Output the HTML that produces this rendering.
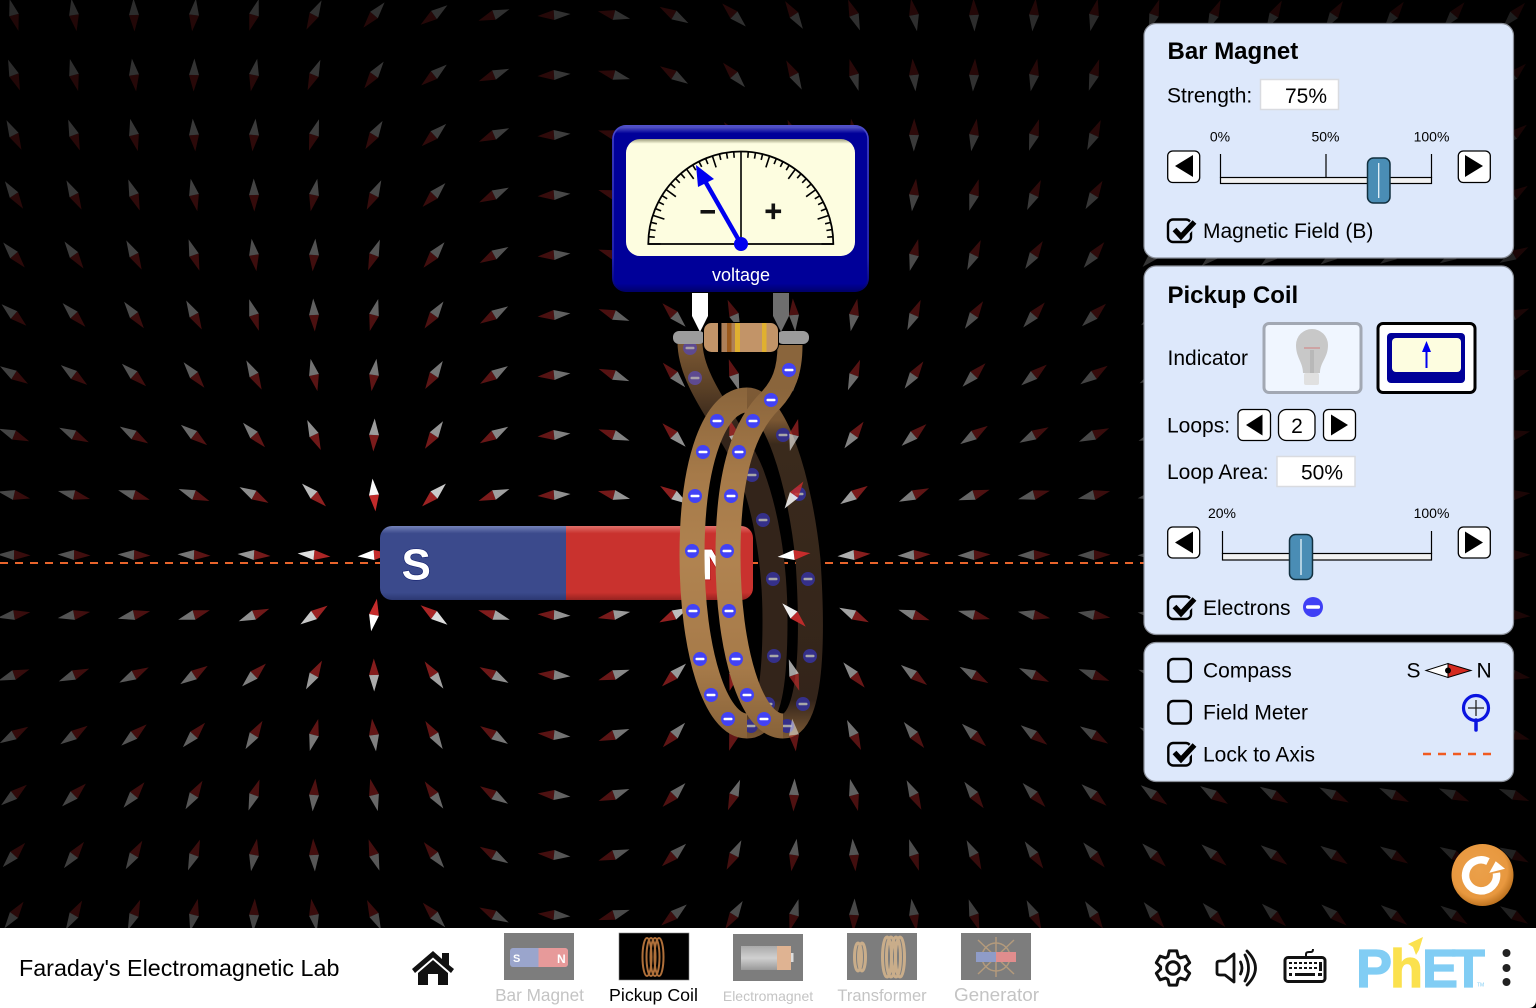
<!DOCTYPE html>
<html><head><meta charset="utf-8"><title>Faraday's Electromagnetic Lab</title>
<style>
html,body{margin:0;padding:0;background:#000;width:1536px;height:1008px;overflow:hidden}
svg{display:block;position:absolute;left:0;top:0}
text{font-family:"Liberation Sans",sans-serif;fill:#000}
.t{font-size:21px}.h{font-size:24px;font-weight:bold}.s{font-size:14px;text-anchor:middle}
.panel{fill:#dde8fb;stroke:#8a8f99;stroke-width:1.2}
.box{fill:#fff;stroke:#d9dbe0;stroke-width:1.5}
.btn{fill:#fff;stroke:#000;stroke-width:1.3}
.cb{fill:none;stroke:#000;stroke-width:2.4}
.halo{fill:none;stroke:#dde8fb;stroke-width:8}
.ck{fill:none;stroke:#000;stroke-width:5.2}
.thumb{fill:#4a8db5;stroke:#12303f;stroke-width:1.5}
.track{fill:#f2f2f2;stroke:#000;stroke-width:1.2}
.tk{stroke:#000;stroke-width:1.2}
.logoB{fill:#81cdf4;stroke:#81cdf4;stroke-width:1.2;font-size:54px;font-weight:bold}
.logoY{fill:#fbe14e;stroke:#fbe14e;stroke-width:1.2;font-size:54px;font-weight:bold}
</style></head>
<body>
<svg width="1536" height="1008" viewBox="0 0 1536 1008" xmlns="http://www.w3.org/2000/svg">
<defs>
<linearGradient id="backG" gradientUnits="userSpaceOnUse" x1="0" y1="340" x2="0" y2="740">
<stop offset="0" stop-color="#7e5a34"/><stop offset=".12" stop-color="#5a4026"/><stop offset=".22" stop-color="#33241a"/><stop offset=".9" stop-color="#33241a"/><stop offset=".97" stop-color="#6a4c2e"/><stop offset="1" stop-color="#7e5a34"/>
</linearGradient>
<linearGradient id="backR" gradientUnits="userSpaceOnUse" x1="0" y1="340" x2="0" y2="740">
<stop offset="0" stop-color="#83603a"/><stop offset=".2" stop-color="#7a5733"/><stop offset=".26" stop-color="#3a2a1c"/><stop offset=".9" stop-color="#33241a"/><stop offset=".97" stop-color="#6a4c2e"/><stop offset="1" stop-color="#7e5a34"/>
</linearGradient>
<linearGradient id="frontG" gradientUnits="userSpaceOnUse" x1="0" y1="388" x2="0" y2="738">
<stop offset="0" stop-color="#8a653c"/><stop offset=".25" stop-color="#a67a49"/><stop offset=".5" stop-color="#b08350"/><stop offset=".8" stop-color="#a67a49"/><stop offset="1" stop-color="#876239"/>
</linearGradient>
<linearGradient id="magS" x1="0" y1="0" x2="0" y2="1"><stop offset="0" stop-color="#7482b8"/><stop offset=".1" stop-color="#3b4a8c"/><stop offset=".9" stop-color="#3b4a8c"/><stop offset="1" stop-color="#2c3872"/></linearGradient>
<linearGradient id="magN" x1="0" y1="0" x2="0" y2="1"><stop offset="0" stop-color="#e0716a"/><stop offset=".1" stop-color="#c9322e"/><stop offset=".9" stop-color="#c9322e"/><stop offset="1" stop-color="#962220"/></linearGradient>
<linearGradient id="vm" x1="0" y1="0" x2="0" y2="1"><stop offset="0" stop-color="#6e6ed0"/><stop offset=".05" stop-color="#000099"/><stop offset=".95" stop-color="#000099"/><stop offset="1" stop-color="#00006a"/></linearGradient>
<linearGradient id="vb" x1="0" y1="0" x2="0" y2="1"><stop offset="0" stop-color="#4a4ac8"/><stop offset=".8" stop-color="#2a2ab0"/><stop offset="1" stop-color="#00006a"/></linearGradient>
<linearGradient id="vs" x1="0" y1="0" x2="0" y2="1"><stop offset="0" stop-color="#9a9a7a"/><stop offset=".04" stop-color="#fdfde0"/><stop offset="1" stop-color="#fdfde0"/></linearGradient>
<radialGradient id="rs" cx=".45" cy=".42" r=".6"><stop offset="0" stop-color="#eba04a"/><stop offset=".75" stop-color="#e8983f"/><stop offset="1" stop-color="#b86e1c"/></radialGradient>
<linearGradient id="bat" x1="0" y1="0" x2="0" y2="1"><stop offset="0" stop-color="#aaa"/><stop offset=".5" stop-color="#d0d0d0"/><stop offset="1" stop-color="#999"/></linearGradient>
</defs>

<rect width="1536" height="1008" fill="#000"/>

<!-- axis -->
<line x1="0" y1="563" x2="1144" y2="563" stroke="#e8642c" stroke-width="2" stroke-dasharray="8 7"/>

<!-- back of coil -->
<g fill="none" stroke-width="25">
<path stroke="url(#backG)" d="M690 342C690 385 735 430 752 475C765 510 775 560 775 620C775 680 770 726 747 726"/>
<path stroke="url(#backR)" d="M747 400C775 400 800 480 808 560C812 620 815 726 783 726"/>
</g>
<g id="backE"></g>

<!-- compass needles -->
<g id="needles"></g>

<!-- magnet -->
<path d="M392 526H566V600H392a12 12 0 0 1-12-12V538a12 12 0 0 1 12-12z" fill="url(#magS)"/>
<path d="M566 526H741a12 12 0 0 1 12 12V588a12 12 0 0 1-12 12H566z" fill="url(#magN)"/>
<text x="401.500" y="579.500" font-size="44" font-weight="bold" style="fill:#fff;stroke:#14206e;stroke-width:1.2;paint-order:stroke">S</text>
<text x="701.500" y="579.500" font-size="44" font-weight="bold" style="fill:#fff;stroke:#a00;stroke-width:1.2;paint-order:stroke">N</text>

<!-- front of coil -->
<g fill="none" stroke="url(#frontG)" stroke-width="25">
<path d="M747 726C715 726 692 650 692 555C692 460 715 400 747 400"/>
<path d="M783 726C751 726 728 650 728 555C728 470 745 425 771 400C783 387 790 372 790 345"/>
</g>
<g id="frontE"></g>

<!-- terminals and resistor -->
<path d="M692 293h16v23l-8 16l-8-16z" fill="#fff"/>
<path d="M773 293h16v23l-8 16l-8-16z" fill="#6e6e6e"/>
<rect x="673" y="331" width="32" height="13" rx="6" fill="#9c9c9c"/>
<rect x="777" y="331" width="32" height="13" rx="6" fill="#9c9c9c"/>
<rect x="703.5" y="322.5" width="75" height="30" rx="8" fill="#c29468" stroke="#000" stroke-width="1"/>
<rect x="722" y="323" width="13" height="29" fill="#ae8058"/>
<rect x="718" y="323" width="3.5" height="29" fill="#000"/>
<rect x="727" y="323" width="4.5" height="29" fill="#9c5a1c"/>
<rect x="735" y="323" width="5" height="29" fill="#e0b030"/>
<rect x="762" y="323" width="4.5" height="29" fill="#e0b030"/>

<!-- voltmeter -->
<rect x="612" y="125" width="257" height="167" rx="14" fill="url(#vm)"/>
<rect x="613" y="126" width="255" height="165" rx="13" fill="none" stroke="url(#vb)" stroke-width="1.5"/>
<rect x="626" y="139" width="229" height="117" rx="14" fill="url(#vs)"/>
<g id="ticks" stroke="#000" stroke-width="1.6"></g>
<path d="M648.3 244A92.5 92.5 0 0 1 833.3 244Z" fill="none" stroke="#000" stroke-width="1.8"/>
<line x1="741" y1="151" x2="741" y2="244" stroke="#000" stroke-width="1.6"/>
<rect x="700.5" y="210" width="14.5" height="3.6" fill="#111"/>
<path d="M765.5 209.5h6v-6h3.600v6h6v3.600h-6v6h-3.600v-6h-6z" fill="#111"/>
<line x1="741" y1="244" x2="705" y2="181" stroke="#0000f0" stroke-width="4.4"/>
<path d="M696 165L714 179L698 187z" fill="#0000f0"/>
<circle cx="741" cy="244" r="7" fill="#0000f0"/>
<text x="741" y="281" font-size="18" text-anchor="middle" style="fill:#fff">voltage</text>

<!-- panel 1 -->
<rect class="panel" x="1144" y="23.5" width="369.5" height="234.5" rx="12"/>
<text class="h" x="1167.500" y="59">Bar Magnet</text>
<text class="t" x="1167" y="102.500">Strength:</text>
<rect class="box" x="1260.500" y="79.500" width="78" height="30"/>
<text class="t" x="1327" y="103" text-anchor="end">75%</text>
<text class="s" x="1220" y="141.500">0%</text><text class="s" x="1325.500" y="141.500">50%</text><text class="s" x="1431.500" y="141.500">100%</text>
<line class="tk" x1="1220.500" y1="154" x2="1220.500" y2="178"/><line class="tk" x1="1326" y1="154" x2="1326" y2="178"/><line class="tk" x1="1431.500" y1="154" x2="1431.500" y2="178"/>
<rect class="track" x="1220.500" y="177.500" width="211" height="6"/>
<rect class="thumb" x="1367.500" y="158" width="22.500" height="45" rx="6"/>
<line x1="1378.700" y1="163" x2="1378.700" y2="198" stroke="#e8f4fa" stroke-width="1.3"/>
<rect class="btn" x="1167.700" y="151" width="32" height="31.500" rx="5"/><path d="M1175 166L1193 155V177z"/>
<rect class="btn" x="1458.300" y="151" width="32" height="31.500" rx="5"/><path d="M1483 166L1465 155V177z"/>
<rect class="cb" x="1168" y="219.500" width="23" height="22.500" rx="5"/><path class="halo" d="M1183 235L1195 222"/><path class="ck" d="M1174.500 229.500L1181 236.500L1194.500 222"/>
<text class="t" x="1203" y="238">Magnetic Field (B)</text>

<!-- panel 2 -->
<rect class="panel" x="1144" y="266" width="369.5" height="368.500" rx="12"/>
<text class="h" x="1167.500" y="303">Pickup Coil</text>
<text class="t" x="1167.500" y="365">Indicator</text>
<rect x="1264" y="323.500" width="97" height="69" rx="5" fill="#f0f6ff" stroke="#a2a8b3" stroke-width="3"/>
<path d="M1303 373C1303 362 1296 358 1296 345A16 16 0 0 1 1328 345C1328 358 1320 362 1320 373z" fill="#c8c8c8"/>
<rect x="1304" y="373" width="15" height="12" rx="2" fill="#e0e0e0"/>
<line x1="1304" y1="348" x2="1320" y2="348" stroke="#d08a8a" stroke-width="1.2"/>
<path d="M1311 350V373M1313 350V373" stroke="#a8a8a8" stroke-width="1" fill="none"/>
<rect x="1378" y="323.500" width="97" height="69" rx="5" fill="#fff" stroke="#000" stroke-width="3"/>
<rect x="1387" y="333" width="78" height="50" rx="4" fill="#000099"/>
<rect x="1392" y="338" width="69" height="34" rx="4" fill="#fdfde0"/>
<path d="M1426.500 368V349" stroke="#0000f0" stroke-width="2"/><path d="M1426.500 341L1431 352H1422z" fill="#0000f0"/>
<text class="t" x="1167" y="432.500">Loops:</text>
<rect class="btn" x="1238" y="409.500" width="32.500" height="31" rx="5"/><path d="M1246 425L1262.500 414.500V435.500z"/>
<rect x="1278.500" y="409.500" width="36.500" height="31" rx="8" fill="#fff" stroke="#000" stroke-width="1.3"/><text class="t" x="1297" y="433" text-anchor="middle">2</text>
<rect class="btn" x="1323.500" y="409.500" width="32" height="31" rx="5"/><path d="M1348 425L1331 414.500V435.500z"/>
<text class="t" x="1167" y="479">Loop Area:</text>
<rect class="box" x="1277" y="456.500" width="78" height="30"/>
<text class="t" x="1343" y="479.500" text-anchor="end">50%</text>
<text class="s" x="1222" y="518">20%</text><text class="s" x="1431.500" y="518">100%</text>
<line class="tk" x1="1222.500" y1="531" x2="1222.500" y2="554"/><line class="tk" x1="1431.500" y1="531" x2="1431.500" y2="554"/>
<rect class="track" x="1222.500" y="553.500" width="209" height="6.500"/>
<rect class="thumb" x="1289.500" y="534.500" width="23" height="45" rx="6"/>
<line x1="1301" y1="539" x2="1301" y2="575" stroke="#e8f4fa" stroke-width="1.3"/>
<rect class="btn" x="1167.700" y="527" width="32" height="31" rx="5"/><path d="M1175 542.500L1193 531.500V553.500z"/>
<rect class="btn" x="1458.300" y="527" width="32" height="31" rx="5"/><path d="M1483 542.500L1465 531.500V553.500z"/>
<rect class="cb" x="1168" y="596.500" width="23" height="22.500" rx="5"/><path class="halo" d="M1183 612L1195 599"/><path class="ck" d="M1174.500 606.500L1181 613.500L1194.500 599"/>
<text class="t" x="1203" y="615">Electrons</text>
<circle cx="1313" cy="607" r="10" fill="#3f3ff5"/><rect x="1306" y="605.300" width="14" height="3.400" rx="1.500" fill="#fff"/>

<!-- panel 3 -->
<rect class="panel" x="1144" y="642.500" width="369.5" height="139" rx="12"/>
<rect class="cb" x="1168.300" y="659" width="22.500" height="22.500" rx="5"/>
<text class="t" x="1203" y="677.500">Compass</text>
<text class="t" x="1406.500" y="677.500">S</text><text class="t" x="1476.500" y="677.500">N</text>
<path d="M1426 670.500L1448 663.500V677.500z" fill="#fff" stroke="#000" stroke-width="1"/>
<path d="M1471 670.500L1448 663.500V677.500z" fill="#d42a20" stroke="#000" stroke-width="1"/>
<circle cx="1448" cy="670.500" r="3" fill="#000"/>
<rect class="cb" x="1168.300" y="701" width="22.500" height="22.500" rx="5"/>
<text class="t" x="1203" y="719.500">Field Meter</text>
<circle cx="1476" cy="708" r="12.500" fill="none" stroke="#0a14e0" stroke-width="3.200"/>
<path d="M1476 700V716M1468 708H1484" stroke="#222" stroke-width="1.300"/>
<path d="M1476 720V730" stroke="#0a14e0" stroke-width="3.500" stroke-linecap="round"/>
<rect class="cb" x="1168.300" y="743" width="22.500" height="22.500" rx="5"/><path class="halo" d="M1183 758L1195 745"/><path class="ck" d="M1174.500 752.500L1181 759.500L1194.500 745"/>
<text class="t" x="1203" y="761.500">Lock to Axis</text>
<line x1="1423" y1="754" x2="1491" y2="754" stroke="#f05a20" stroke-width="2.500" stroke-dasharray="8 7"/>

<!-- reset -->
<circle cx="1482.500" cy="875" r="31" fill="url(#rs)"/>
<path d="M1488 861.500A15.500 15.500 0 1 0 1496.400 873" fill="none" stroke="#fff" stroke-width="7.500"/>
<path d="M1495.700 861.300L1505 868.700L1489.300 872.700z" fill="#fff"/>

<!-- nav -->
<rect x="0" y="928" width="1536" height="80" fill="#fff"/>
<path d="M1536 1001v7h-7a7 7 0 0 0 7-7z" fill="#000"/>
<text x="19" y="976" font-size="23.300">Faraday's Electromagnetic Lab</text>
<path d="M412 969L433 951L442 959V953H449V965L454 969L451 973L433 957.500L415 973z" fill="#111"/>
<path d="M418 973L433 960L448 973V985H438V974H428V985H418z" fill="#111"/>

<rect x="504" y="933" width="70" height="47" fill="#7d7d7d"/>
<rect x="510" y="948" width="58" height="19" rx="3" fill="#9aa5cc"/><path d="M538.500 948H565a3 3 0 0 1 3 3V964a3 3 0 0 1-3 3H538.500z" fill="#e79a9a"/>
<text x="513" y="962" font-size="11" font-weight="bold" style="fill:#fff">S</text><text x="557" y="963" font-size="12" font-weight="bold" style="fill:#fff">N</text>
<rect x="619" y="933" width="70" height="47" fill="#000" stroke="#888" stroke-width=".6"/>
<g fill="none" stroke="#b0703a" stroke-width="2"><ellipse cx="647" cy="957" rx="4.500" ry="19"/><ellipse cx="651" cy="957" rx="4.500" ry="19"/><ellipse cx="655" cy="957" rx="4.500" ry="19"/><ellipse cx="659" cy="957" rx="4.500" ry="19"/></g>
<rect x="733" y="934" width="70" height="47" fill="#7d7d7d"/>
<rect x="741" y="946" width="36" height="24" fill="url(#bat)"/><rect x="777" y="946" width="14" height="24" fill="#dfb392"/><rect x="791" y="953" width="2.500" height="9" fill="#ddd"/>
<rect x="847" y="933" width="70" height="47" fill="#7d7d7d"/>
<g fill="none" stroke="#c9ad8a" stroke-width="3"><ellipse cx="858" cy="957" rx="3.500" ry="14"/><ellipse cx="862" cy="957" rx="3.500" ry="14"/><ellipse cx="887" cy="957" rx="4.500" ry="20"/><ellipse cx="891" cy="957" rx="4.500" ry="20"/><ellipse cx="896" cy="957" rx="4.500" ry="20"/><ellipse cx="900" cy="957" rx="4.500" ry="20"/></g>
<rect x="961" y="933" width="70" height="47" fill="#7d7d7d"/>
<g fill="none" stroke="#b39a7c" stroke-width="1.500"><circle cx="996" cy="957" r="14"/><path d="M996 937V977M978 940L1014 974M1014 940L978 974M976 957H1016"/></g>
<rect x="976" y="952" width="40" height="10" fill="#8f9cc8"/><rect x="996" y="952" width="20" height="10" fill="#e08d8d"/>

<g text-anchor="middle">
<text x="539.500" y="1001" font-size="17.200" style="fill:#c4c4c4">Bar Magnet</text>
<text x="653.500" y="1001" font-size="17.800">Pickup Coil</text>
<text x="768" y="1001" font-size="14" style="fill:#c4c4c4">Electromagnet</text>
<text x="882" y="1001" font-size="16.500" style="fill:#c4c4c4">Transformer</text>
<text x="996.500" y="1001" font-size="18.900" style="fill:#c4c4c4">Generator</text>
</g>

<!-- right icons -->
<path id="gear" fill="none" stroke="#111" stroke-width="3" stroke-linejoin="round"/>
<circle cx="1173" cy="968" r="6.300" fill="none" stroke="#111" stroke-width="3"/>
<path d="M1217 963Q1217 961 1220 961H1225L1234 954V982L1225 975H1220Q1217 975 1217 973z" fill="none" stroke="#111" stroke-width="2.800" stroke-linejoin="round"/>
<g fill="none" stroke="#111" stroke-width="2.800" stroke-linecap="round"><path d="M1240.500 962Q1243.500 968 1240.500 974"/><path d="M1245 955Q1252 968 1245 981"/><path d="M1247 951Q1264 968 1247 985"/></g>
<rect x="1285" y="957.500" width="40" height="24" rx="3" fill="none" stroke="#111" stroke-width="3"/>
<path d="M1306 957V954Q1306 952 1309 952H1311Q1313 952 1313 949" fill="none" stroke="#111" stroke-width="2"/>
<g fill="#111"><path d="M1289 962h3v2h-3zM1294 962h3v2h-3zM1299 962h3v2h-3zM1304 962h3v2h-3zM1309 962h3v2h-3zM1314 962h3v2h-3zM1319 962h3v2h-3zM1289 967h3v2h-3zM1294 967h3v2h-3zM1299 967h3v2h-3zM1304 967h3v2h-3zM1309 967h3v2h-3zM1314 967h3v2h-3zM1319 962h3v9h-3zM1289 973h3v3h-3zM1295 973h20v3h-20zM1318 973h4v3h-4z"/></g>

<!-- PhET logo -->
<text class="logoB" x="1356" y="987">P</text>
<text class="logoY" x="1390" y="987">h</text>
<text class="logoB" x="1422" y="987">E</text>
<text class="logoB" x="1452" y="987">T</text>
<path d="M1423 937L1408 944L1413 947L1416 955L1419 950z" fill="#fbe14e"/>
<text x="1477" y="986.500" font-size="5" style="fill:#81cdf4">TM</text>
<circle cx="1506.500" cy="953" r="4" fill="#222"/><circle cx="1506.500" cy="968" r="4" fill="#222"/><circle cx="1506.500" cy="982" r="4" fill="#222"/>
</svg>
<script>
(function(){
var h="";
var ys=[535,549,563,577,591];
for(var j=0;j<16;j++){for(var i=0;i<26;i++){
  var x=14+60*i,y=15+60*j,fx=0,fy=0;
  for(var c=0;c<5;c++){
    var ax=380-x,ay=ys[c]-y,ar=Math.sqrt(ax*ax+ay*ay)||1;
    var bx=x-753,by=y-ys[c],br=Math.sqrt(bx*bx+by*by)||1;
    fx+=(ax/(ar*ar*ar)+bx/(br*br*br))/5;
    fy+=(ay/(ar*ar*ar)+by/(br*br*br))/5;
  }
  var m=Math.sqrt(fx*fx+fy*fy)||1e-9,ux=fx/m,uy=fy/m;
  var al=Math.min(1,0.33*Math.pow(m/8.5e-6,m<8.5e-6?0.38:0.31));
  var L=16.5,W=5;
  var tx=(x+ux*L).toFixed(1),ty=(y+uy*L).toFixed(1);
  var qx=(x-ux*L).toFixed(1),qy=(y-uy*L).toFixed(1);
  var s1=(x-uy*W).toFixed(1)+","+(y+ux*W).toFixed(1),s2=(x+uy*W).toFixed(1)+","+(y-ux*W).toFixed(1);
  h+='<g opacity="'+al.toFixed(3)+'"><polygon points="'+tx+','+ty+' '+s1+' '+s2+'" fill="#c62c2c"/><polygon points="'+qx+','+qy+' '+s1+' '+s2+'" fill="#fff"/></g>';
}}
document.getElementById("needles").innerHTML=h;
function el(p,fill,bar){var o="";p.forEach(function(c){o+='<circle cx="'+c[0]+'" cy="'+c[1]+'" r="7" fill="'+fill+'"/><rect x="'+(c[0]-4.5)+'" y="'+(c[1]-1.2)+'" width="9" height="2.4" rx="1" fill="'+bar+'"/>';});return o;}
document.getElementById("backE").innerHTML=
  el([[690,348],[695,378]],"#5e4a90","#a8a0a8")+
  el([[783,435],[799,494],[752,475],[763,520],[773,579],[808,579],[774,656],[810,656],[768,704],[803,704],[751,726],[787,726]],"#35308a","#a8a8a8");
document.getElementById("frontE").innerHTML=el([[717,421],[703,452],[695,496],[692,551],[693,611],[700,659],[711,695],[728,719],[753,421],[739,452],[731,496],[727,551],[729,611],[736,659],[747,695],[764,719],[771,400],[789,370]],"#4242f5","#fff");
var t="";
for(var k=-20;k<=20;k++){if(k===0)continue;var a=k*4.5*Math.PI/180,sn=Math.sin(a),cs=Math.cos(a),R=92.5,l=(k%4===0)?12:6;
  t+='<line x1="'+(741+R*sn).toFixed(1)+'" y1="'+(244-R*cs).toFixed(1)+'" x2="'+(741+(R-l)*sn).toFixed(1)+'" y2="'+(244-(R-l)*cs).toFixed(1)+'"/>';}
document.getElementById("ticks").innerHTML=t;
var d="",n=6,cx=1173,cy=968;
for(var q=0;q<n;q++){var c2=q*2*Math.PI/n-Math.PI/2,w=0.3,w2=0.22,ro=17.5,ri=12.5;
  var P=function(r,an){return (cx+r*Math.cos(an)).toFixed(1)+" "+(cy+r*Math.sin(an)).toFixed(1);};
  d+=(q?"L":"M")+P(ri,c2-w-0.12)+"L"+P(ro,c2-w2)+"L"+P(ro,c2+w2)+"L"+P(ri,c2+w+0.12);}
document.getElementById("gear").setAttribute("d",d+"Z");
})();
</script>
</body></html>
